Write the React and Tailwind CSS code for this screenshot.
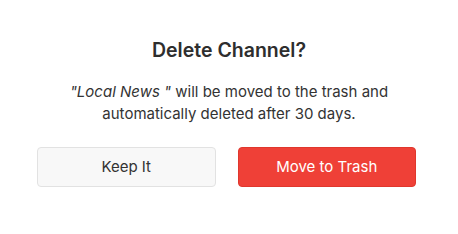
export default function App() {
  return (
    <div className="flex h-[234px] w-[458px] flex-col bg-white pt-[38px] text-[#2e2e2e] [font-family:Inter,'Liberation_Sans',sans-serif]">
      <h1 className="text-center text-[19.5px] font-semibold leading-[25px]">Delete Channel?</h1>
      <p className="mt-[18px] text-center text-[15px] leading-[22px] text-[#333]">
        <span className="italic">"Local News "</span> will be moved to the trash and
        <br />
        automatically deleted after 30 days.
      </p>
      <div className="ml-[37px] mt-[22px] flex w-[379px] gap-[22px]">
        <button
          type="button"
          className="h-[40px] flex-1 rounded-[4px] border border-[#e2e2e2] bg-[#f8f8f8] text-[15px] text-[#333]"
        >
          Keep It
        </button>
        <button
          type="button"
          className="h-[40px] flex-1 rounded-[4px] border border-[#e0372d] bg-[#ef4037] text-[15px] text-white"
        >
          Move to Trash
        </button>
      </div>
    </div>
  )
}
